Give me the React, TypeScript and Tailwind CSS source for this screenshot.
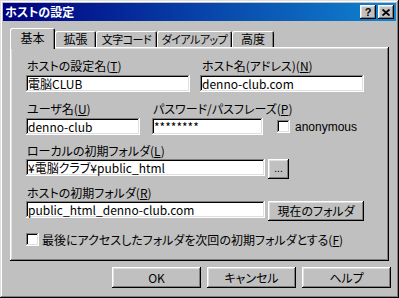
import React from "react";

// Win98-style bevels
const raised =
  "bg-[#c0c0c0] shadow-[inset_-1px_-1px_#000,inset_1px_1px_#fff,inset_-2px_-2px_#808080,inset_2px_2px_#dfdfdf]";
const sunken =
  "bg-white shadow-[inset_-1px_-1px_#fff,inset_1px_1px_#808080,inset_-2px_-2px_#dfdfdf,inset_2px_2px_#000]";

function Key({ k }: { k: string }) {
  return (
    <>
      (<span className="underline underline-offset-[1px]">{k}</span>)
    </>
  );
}

function Field({ value, className }: { value: string; className: string }) {
  return (
    <div className={`${sunken} ${className} h-[17px] pl-[2px] flex items-center whitespace-nowrap overflow-hidden`}>
      {value}
    </div>
  );
}

function Check() {
  return <div className={`${sunken} w-[13px] h-[13px] shrink-0`} />;
}

const tabs = [
  { label: "拡張", cls: "w-[41px] text-[12px]" },
  { label: "文字コード", cls: "w-[61px] text-[11px] tracking-[-0.5px]" },
  { label: "ダイアルアップ", cls: "w-[75px] text-[11px] tracking-[-0.5px]" },
  { label: "高度", cls: "w-[42px] text-[12px]" },
];

export default function App() {
  return (
    <div className="w-[399px] h-[298px] bg-[#c0c0c0] p-[3px] flex flex-col text-[12px] leading-[14px] text-black font-['Noto_Sans_CJK_JP','Noto_Sans',sans-serif] [font-feature-settings:'palt'] shadow-[inset_-1px_-1px_#000,inset_1px_1px_#dfdfdf,inset_-2px_-2px_#808080,inset_2px_2px_#fff]">
      {/* title bar */}
      <div className="h-[18px] flex items-center justify-between pl-[2px] pr-[2px] bg-[linear-gradient(to_right,#000080,#1084d0)]">
        <span className="text-white font-bold">ホストの設定</span>
        <div className="flex gap-[2px]">
          <div className={`${raised} w-[16px] h-[14px] flex items-center justify-center font-bold text-[11px] leading-none font-['Liberation_Sans',sans-serif]`}>
            ?
          </div>
          <div className={`${raised} w-[16px] h-[14px] flex items-center justify-center`}>
            <svg width="8" height="7" viewBox="0 0 8 7">
              <path d="M0.5 0.5 L7.5 6.5 M7.5 0.5 L0.5 6.5" stroke="#000" strokeWidth="1.8" />
            </svg>
          </div>
        </div>
      </div>

      {/* tabs */}
      <div className="ml-[7px] mt-[7px] h-[19px] flex items-end">
        <div className="relative z-10 w-[45px] h-[21px] -mb-[2px] bg-[#c0c0c0] rounded-t-[2px] flex justify-center pt-[3px] shadow-[inset_1px_1px_#fff,inset_-1px_0_#000,inset_-2px_0_#808080]">
          基本
        </div>
        {tabs.map((t) => (
          <div
            key={t.label}
            className={`${t.cls} h-[16px] rounded-t-[2px] flex justify-center pt-[1px] whitespace-nowrap shadow-[inset_1px_1px_#fff,inset_-1px_0_#000,inset_-2px_0_#808080]`}
          >
            {t.label}
          </div>
        ))}
      </div>

      {/* panel */}
      <div className="ml-[7px] w-[379px] h-[214px] pl-[16px] pt-[12px] flex flex-col shadow-[inset_-1px_-1px_#000,inset_1px_1px_#fff,inset_-2px_-2px_#808080,inset_2px_2px_#dfdfdf]">
        <div className="flex gap-[10px]">
          <div className="flex flex-col">
            <div className="pl-[1px]">
              ホストの設定名<Key k="T" />
            </div>
            <Field value="電脳CLUB" className="w-[164px] mt-[2px]" />
          </div>
          <div className="flex flex-col">
            <div className="pl-[2px]">
              ホスト名(アドレス)<Key k="N" />
            </div>
            <Field value="denno-club.com" className="w-[164px] mt-[2px]" />
          </div>
        </div>

        <div className="flex mt-[10px]">
          <div className="flex flex-col w-[114px]">
            <div className="pl-[1px]">
              ユーザ名<Key k="U" />
            </div>
            <Field value="denno-club" className="w-[114px] mt-[2px]" />
          </div>
          <div className="flex flex-col ml-[12px] w-[111px]">
            <div className="pl-[1px] whitespace-nowrap">
              パスワード/パスフレーズ<Key k="P" />
            </div>
            <Field value="********" className="w-[111px] mt-[2px]" />
          </div>
          <div className="self-end h-[17px] ml-[14px] flex items-center gap-[5px] whitespace-nowrap font-['Liberation_Sans',sans-serif]">
            <Check />
            <span>anonymous</span>
          </div>
        </div>

        <div className="mt-[9px] pl-[1px]">
          ローカルの初期フォルダ<Key k="L" />
        </div>
        <div className="mt-[1px] flex items-start gap-[3px]">
          <Field value="¥電脳クラブ¥public_html" className="w-[239px]" />
          <div className={`${raised} w-[21px] h-[20px] flex items-center justify-center text-[10px] pb-[3px]`}>
            ...
          </div>
        </div>

        <div className="mt-[7px] pl-[1px]">
          ホストの初期フォルダ<Key k="R" />
        </div>
        <div className="mt-[1px] flex items-start gap-[3px]">
          <Field value="public_html_denno-club.com" className="w-[239px]" />
          <div className={`${raised} w-[96px] h-[20px] flex items-center justify-center`}>
            現在のフォルダ
          </div>
        </div>

        <div className="mt-[12px] h-[13px] flex items-center gap-[3px]">
          <Check />
          <span className="whitespace-nowrap">
            最後にアクセスしたフォルダを次回の初期フォルダとする<Key k="F" />
          </span>
        </div>
      </div>

      {/* dialog buttons */}
      <div className="mt-[6px] flex justify-end gap-[6px] pr-[5px]">
        <div className={`${raised} w-[89px] h-[21px] flex items-center justify-center`}>OK</div>
        <div className={`${raised} w-[89px] h-[21px] flex items-center justify-center`}>キャンセル</div>
        <div className={`${raised} w-[89px] h-[21px] flex items-center justify-center`}>ヘルプ</div>
      </div>
    </div>
  );
}
